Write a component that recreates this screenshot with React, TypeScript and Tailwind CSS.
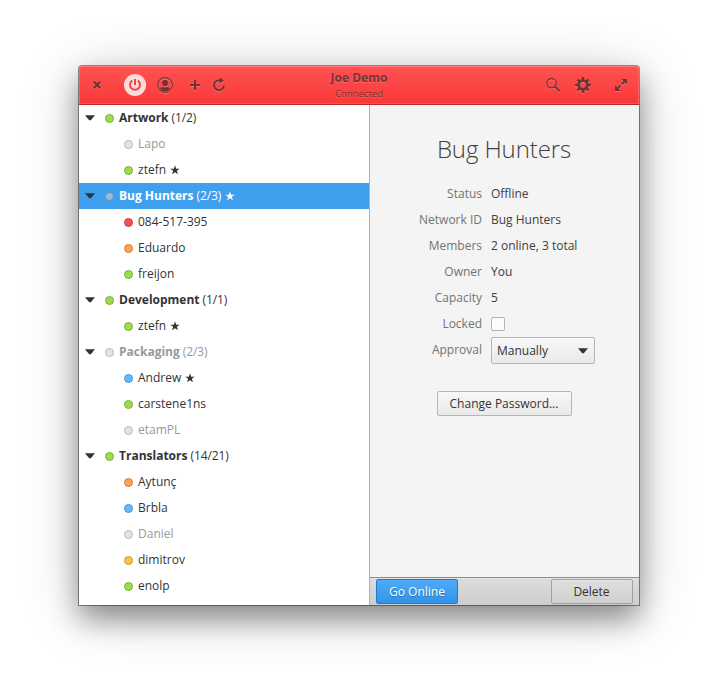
import type { ReactNode } from "react";

type Status = "online" | "offline" | "dim" | "busy" | "away" | "chat" | "idle";

const dotStyles: Record<Status, string> = {
  online: "bg-[#9bdb4d] border-[#7cb03e]",
  offline: "bg-[#e4e4e4] border-[#b9b9b9]",
  dim: "bg-[#97bbdb] border-[#6d93b3]",
  busy: "bg-[#ed5353] border-[#bf4343]",
  away: "bg-[#ffa154] border-[#cc8144]",
  chat: "bg-[#64baff] border-[#4f95cc]",
  idle: "bg-[#f9c440] border-[#c79d33]",
};

interface Row {
  name: string;
  status: Status;
  count?: string;
  star?: boolean;
  selected?: boolean;
}

const rows: Row[] = [
  { name: "Artwork", status: "online", count: "(1/2)" },
  { name: "Lapo", status: "offline" },
  { name: "ztefn", status: "online", star: true },
  { name: "Bug Hunters", status: "dim", count: "(2/3)", star: true, selected: true },
  { name: "084-517-395", status: "busy" },
  { name: "Eduardo", status: "away" },
  { name: "freijon", status: "online" },
  { name: "Development", status: "online", count: "(1/1)" },
  { name: "ztefn", status: "online", star: true },
  { name: "Packaging", status: "offline", count: "(2/3)" },
  { name: "Andrew", status: "chat", star: true },
  { name: "carstene1ns", status: "online" },
  { name: "etamPL", status: "offline" },
  { name: "Translators", status: "online", count: "(14/21)" },
  { name: "Aytunç", status: "away" },
  { name: "Brbla", status: "chat" },
  { name: "Daniel", status: "offline" },
  { name: "dimitrov", status: "idle" },
  { name: "enolp", status: "online" },
];

function Arrow() {
  return (
    <svg width="10" height="6" viewBox="0 0 10 6" className="shrink-0">
      <path d="M0 .2h10L5.8 5.2H4.2z" fill="#333" />
    </svg>
  );
}

function Star() {
  return (
    <svg width="10" height="10" viewBox="0 0 10 10" className="ml-1 shrink-0" fill="currentColor">
      <path d="M5 .3l1.15 3.4h3.6L6.85 5.8l1.1 3.5L5 7.2 2.05 9.3l1.1-3.5L.25 3.7h3.6z" />
    </svg>
  );
}

function TreeRow({ row }: { row: Row }) {
  const color = row.selected ? "bg-[#3e9fef] text-white" : row.status === "offline" ? "text-[#999]" : "text-[#333]";
  return (
    <div className={`flex h-[26px] shrink-0 items-center ${color} ${row.count ? "pl-[6px]" : "pl-[45px]"}`}>
      {row.count && (
        <span className="mr-[10px] flex">
          <Arrow />
        </span>
      )}
      <span className={`mr-[5px] size-[9px] shrink-0 rounded-full border ${dotStyles[row.status]}`} />
      <span className={row.count ? "pb-[2px] font-bold" : "pb-[2px]"}>{row.name}</span>
      {row.count && <span className="ml-[3px] pb-[2px] tracking-[-0.1px]">{row.count}</span>}
      {row.star && <Star />}
    </div>
  );
}

function Icon({ className = "", children }: { className?: string; children: ReactNode }) {
  return (
    <svg width="16" height="16" viewBox="0 0 16 16" fill="none" stroke="#6b3535" className={`shrink-0 drop-shadow-[0_1px_0_rgba(255,255,255,0.25)] ${className}`}>
      {children}
    </svg>
  );
}

const gearTeeth = [0, 45, 90, 135, 180, 225, 270, 315];

function Header() {
  return (
    <header className="grid h-[39px] shrink-0 grid-cols-[1fr_auto_1fr] items-center rounded-t-[3px] border-b border-[#b92b2b] bg-linear-to-b from-[#ff5252] to-[#fa3737] shadow-[inset_0_1px_0_#ff7777,inset_1px_0_0_#ff6060,inset_-1px_0_0_#ff6060,inset_0_-1px_0_#ff4c4c]">
      <div className="flex items-center pl-[10px]">
        <Icon>
          <path d="M4.8 4.8l6.4 6.4M11.2 4.8l-6.4 6.4" strokeWidth="2.2" />
        </Icon>
        <span className="ml-[19px] flex size-[22px] items-center justify-center rounded-full bg-[#ffdcdc]">
          <svg width="16" height="16" viewBox="0 0 16 16" fill="none" stroke="#f04444" strokeWidth="2">
            <path d="M5.2 3.6a5 5 0 1 0 5.6 0M8 2v6" />
          </svg>
        </span>
        <Icon className="ml-[11px]">
          <circle cx="8" cy="8" r="7.4" strokeWidth="1.1" />
          <ellipse cx="8" cy="6.1" rx="2.9" ry="3.2" fill="#6b3535" stroke="none" />
          <path d="M3 12c.5-1.4 1.6-1.9 3.2-2.1.9.7 2.7.7 3.6 0 1.6.2 2.7.7 3.2 2.1A6.3 6.3 0 0 1 8 14.3 6.3 6.3 0 0 1 3 12z" fill="#6b3535" stroke="none" />
        </Icon>
        <Icon className="ml-[14px]">
          <path d="M3 8h10M8 3v10" strokeWidth="2" />
        </Icon>
        <Icon className="ml-2">
          <path d="M9.5 3.4H7.6a4.9 4.9 0 1 0 5.3 5.4" strokeWidth="2" />
          <path d="M8.6 .4v6L13.2 3.4z" fill="#6b3535" stroke="none" />
        </Icon>
      </div>
      <div className="flex flex-col items-center text-[#703535] [text-shadow:0_1px_0_rgba(255,255,255,0.2)]">
        <span className="h-[16px] text-[12px] leading-[16px] font-bold">Joe Demo</span>
        <span className="h-[15px] text-[9.5px] leading-[15px] tracking-[0.05px]">Connected</span>
      </div>
      <div className="flex items-center justify-end pr-[10px]">
        <Icon>
          <circle cx="6.5" cy="6.2" r="4.7" strokeWidth="1.3" />
          <path d="M9.9 9.6l4.8 4.8" strokeWidth="1.9" />
        </Icon>
        <Icon className="ml-[14px]">
          <circle cx="8" cy="8" r="4.3" strokeWidth="2.8" />
          {gearTeeth.map((angle) => (
            <path key={angle} d="M6.6 3l.3-2.9h2.2l.3 2.9z" fill="#6b3535" stroke="none" transform={`rotate(${angle} 8 8)`} />
          ))}
        </Icon>
        <Icon className="ml-[22px]">
          <path d="M8.7 7.3l3.4-3.4M7.3 8.7l-3.4 3.4" strokeWidth="2" />
          <path d="M8.5 2H14v5.5zM2 8.5V14h5.5z" fill="#6b3535" stroke="none" />
        </Icon>
      </div>
    </header>
  );
}

function Field({ label, children }: { label: string; children: ReactNode }) {
  return (
    <div className="flex h-[26px] items-center">
      <span className="mr-[9px] w-[112px] text-right text-[#737373]">{label}</span>
      <span className="text-[#404040]">{children}</span>
    </div>
  );
}

function Details() {
  return (
    <section className="flex min-w-0 flex-1 flex-col bg-[#f4f4f4]">
      <div className="flex flex-1 flex-col">
        <h1 className="mt-[27px] h-[34px] pr-px text-center text-[24px] leading-[34px] font-light tracking-[-0.1px] text-[#404040]">Bug Hunters</h1>
        <div className="mt-[14px]">
          <Field label="Status">Offline</Field>
          <Field label="Network ID">Bug Hunters</Field>
          <Field label="Members">2 online, 3 total</Field>
          <Field label="Owner">You</Field>
          <Field label="Capacity">5</Field>
          <Field label="Locked">
            <span className="mt-px block size-[14px] rounded-[2px] border border-[#b5b5b5] bg-[#fbfbfb]" />
          </Field>
          <div className="flex">
            <span className="mr-[9px] h-[27px] w-[112px] text-right leading-[28px] text-[#737373]">Approval</span>
            <button className="mt-px flex h-[27px] w-[104px] items-center justify-between rounded-[2px] border border-[#b5b5b5] bg-linear-to-b from-[#f8f8f8] to-[#e9e9e9] pr-[6px] pl-[5px] text-[#333]">
              <span className="pb-px">Manually</span>
              <Arrow />
            </button>
          </div>
        </div>
        <button className="mt-[27px] ml-[-1px] h-[25px] w-[135px] self-center rounded-[2px] border border-[#b5b5b5] bg-linear-to-b from-[#f8f8f8] to-[#e9e9e9] text-[#333]">
          Change Password...
        </button>
      </div>
      <footer className="flex h-7 shrink-0 items-center justify-between border-t border-[#8c8c8c] bg-linear-to-b from-[#dcdcdc] to-[#cecece] px-[6px] shadow-[inset_0_1px_0_#e6e6e6]">
        <button className="h-[25px] w-[82px] rounded-[2px] border border-[#1f7dcb] bg-linear-to-b from-[#4fabf9] to-[#3193e6] text-white [text-shadow:0_1px_1px_rgba(0,0,0,0.3)]">
          Go Online
        </button>
        <button className="h-[25px] w-[82px] rounded-[2px] border border-[#a0a0a0] bg-linear-to-b from-[#dedede] to-[#d0d0d0] pr-px text-[#333] shadow-[inset_0_1px_0_#e6e6e6]">
          Delete
        </button>
      </footer>
    </section>
  );
}

export default function App() {
  return (
    <div className="h-[698px] w-[718px] overflow-hidden bg-white pt-[66px] pl-[79px] font-['Open_Sans','Noto_Sans',sans-serif] text-[12px] leading-[17px]">
      <div className="flex h-[539px] w-[560px] flex-col rounded-t-[3px] shadow-[0_0_0_1px_rgba(0,0,0,0.4),0_14px_28px_rgba(0,0,0,0.38),0_8px_60px_rgba(0,0,0,0.2)]">
        <Header />
        <main className="flex min-h-0 flex-1">
          <aside className="flex w-[291px] shrink-0 flex-col border-r border-[#b0b0b0] bg-white">
            {rows.map((row, i) => (
              <TreeRow key={i} row={row} />
            ))}
          </aside>
          <Details />
        </main>
      </div>
    </div>
  );
}
